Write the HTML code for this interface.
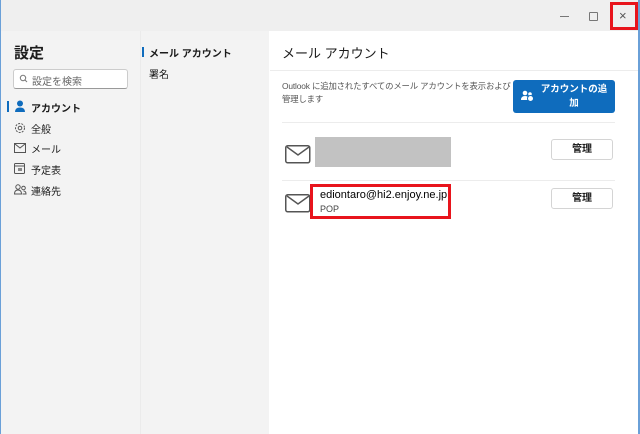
<!DOCTYPE html>
<html><head><meta charset="utf-8"><style>
*{margin:0;padding:0;box-sizing:border-box}
body{width:640px;height:434px;overflow:hidden;background:#f3f3f3;font-family:"Liberation Sans","Noto Sans CJK JP",sans-serif;position:relative;color:#1b1b1b}
.a{position:absolute}
</style></head><body>
<div class="a" style="left:0;top:0;width:640px;height:31px;background:#efefef"></div>
<div class="a" style="left:0;top:0;width:1px;height:434px;background:#6aa0d8"></div>
<div class="a" style="left:638px;top:0;width:2px;height:434px;background:#6aa0d8"></div>
<div class="a" style="left:560px;top:16px;width:9px;height:1px;background:#777"></div>
<div class="a" style="left:589px;top:12px;width:9px;height:9px;border:1px solid #777;border-radius:1px"></div>
<div class="a" style="left:610px;top:2px;width:28px;height:28px;border:3px solid #e8141c"></div>
<div class="a" style="left:619px;top:8px;font-size:13px;color:#555">×</div>
<div class="a" style="left:140px;top:31px;width:1px;height:403px;background:#ebebeb"></div>
<div class="a" style="left:269px;top:31px;width:369px;height:403px;background:#fff"></div>
<div class="a" style="left:14px;top:42px;font-size:15px;font-weight:bold">設定</div>
<div class="a" style="left:13px;top:69px;width:115px;height:20px;background:#fff;border:1px solid #ccc;border-bottom-color:#999;border-radius:3px;font-size:10px;color:#666;padding:3px 0 0 18px">設定を検索</div>
<svg class="a" style="left:19px;top:74px" width="9" height="9"><circle cx="4" cy="4" r="2.7" fill="none" stroke="#777"/><path d="M6 6L8 8" stroke="#777"/></svg>
<div class="a" style="left:7px;top:101px;width:2px;height:11px;background:#0f6cbd"></div>
<svg class="a" style="left:14px;top:100px" width="12" height="13"><circle cx="6" cy="3.5" r="3" fill="#0f6cbd"/><path d="M1 12Q1 7.5 6 7.5Q11 7.5 11 12Z" fill="#0f6cbd"/></svg>
<div class="a" style="left:31px;top:100px;font-size:10px;font-weight:bold">アカウント</div>
<svg class="a" style="left:14px;top:122px" width="12" height="12"><circle cx="6" cy="6" r="4.5" fill="none" stroke="#555" stroke-dasharray="2 1.2"/><circle cx="6" cy="6" r="1.8" fill="none" stroke="#555"/></svg>
<div class="a" style="left:31px;top:121px;font-size:10px">全般</div>
<svg class="a" style="left:14px;top:143px" width="12" height="10"><rect x=".5" y=".5" width="11" height="9" fill="none" stroke="#555"/><path d="M1 1L6 5L11 1" fill="none" stroke="#555"/></svg>
<div class="a" style="left:31px;top:141px;font-size:10px">メール</div>
<svg class="a" style="left:14px;top:163px" width="11" height="11"><rect x=".5" y=".5" width="10" height="10" rx="1" fill="none" stroke="#555"/><path d="M1 3H10" stroke="#555"/><rect x="4" y="5" width="4" height="3" fill="#888"/></svg>
<div class="a" style="left:31px;top:162px;font-size:10px">予定表</div>
<svg class="a" style="left:14px;top:184px" width="13" height="11"><circle cx="4" cy="3" r="2.2" fill="none" stroke="#555"/><path d="M.5 10Q.5 6 4 6Q7.5 6 7.5 10Z" fill="none" stroke="#555"/><circle cx="9.5" cy="4" r="1.8" fill="none" stroke="#555"/><path d="M8.5 10H12Q12 7 9.5 7" fill="none" stroke="#555"/></svg>
<div class="a" style="left:31px;top:183px;font-size:10px">連絡先</div>
<div class="a" style="left:142px;top:47px;width:2px;height:10px;background:#0f6cbd"></div>
<div class="a" style="left:149px;top:45px;font-size:10px;font-weight:bold">メール アカウント</div>
<div class="a" style="left:149px;top:66px;font-size:10px">署名</div>
<div class="a" style="left:282px;top:43px;font-size:13px">メール アカウント</div>
<div class="a" style="left:270px;top:70px;width:368px;height:1px;background:#ececec"></div>
<div class="a" style="left:282px;top:80px;width:228px;font-size:8.4px;letter-spacing:-0.15px;color:#555;line-height:13px;white-space:nowrap">Outlook に追加されたすべてのメール アカウントを表示および<br>管理します</div>
<div class="a" style="left:513px;top:80px;width:102px;height:33px;background:#0f6cbd;border-radius:3px;color:#fff;font-size:9.5px;font-weight:bold;text-align:center;line-height:14px;padding:3px 4px 0 24px">アカウントの追加</div>
<svg class="a" style="left:521px;top:90px" width="13" height="12"><circle cx="4" cy="3" r="2.3" fill="#fff"/><path d="M0 10Q0 6 4 6Q8 6 8 10Z" fill="#fff"/><circle cx="9" cy="4" r="1.8" fill="#fff"/><circle cx="9.5" cy="8.5" r="3" fill="#fff" stroke="#0f6cbd"/></svg>
<div class="a" style="left:282px;top:122px;width:333px;height:1px;background:#ececec"></div>
<svg class="a" style="left:285px;top:145px" width="26" height="19"><rect x=".75" y=".75" width="24" height="17" rx="2" fill="none" stroke="#555" stroke-width="1.5"/><path d="M2 2L13 10L24 2" fill="none" stroke="#555" stroke-width="1.5"/></svg>
<div class="a" style="left:315px;top:137px;width:136px;height:30px;background:#c2c2c2"></div>
<div class="a" style="left:551px;top:139px;width:62px;height:21px;border:1px solid #d4d4d4;border-radius:3px;font-size:10px;font-weight:bold;text-align:center;line-height:19px">管理</div>
<div class="a" style="left:282px;top:180px;width:333px;height:1px;background:#ececec"></div>
<svg class="a" style="left:285px;top:194px" width="26" height="19"><rect x=".75" y=".75" width="24" height="17" rx="2" fill="none" stroke="#555" stroke-width="1.5"/><path d="M2 2L13 10L24 2" fill="none" stroke="#555" stroke-width="1.5"/></svg>
<div class="a" style="left:310px;top:184px;width:141px;height:35px;border:3px solid #e8141c"></div>
<div class="a" style="left:320px;top:189px;font-size:11px;color:#000">ediontaro@hi2.enjoy.ne.jp</div>
<div class="a" style="left:320px;top:204px;font-size:9px;color:#444">POP</div>
<div class="a" style="left:551px;top:188px;width:62px;height:21px;border:1px solid #d4d4d4;border-radius:3px;font-size:10px;font-weight:bold;text-align:center;line-height:19px">管理</div>
</body></html>
